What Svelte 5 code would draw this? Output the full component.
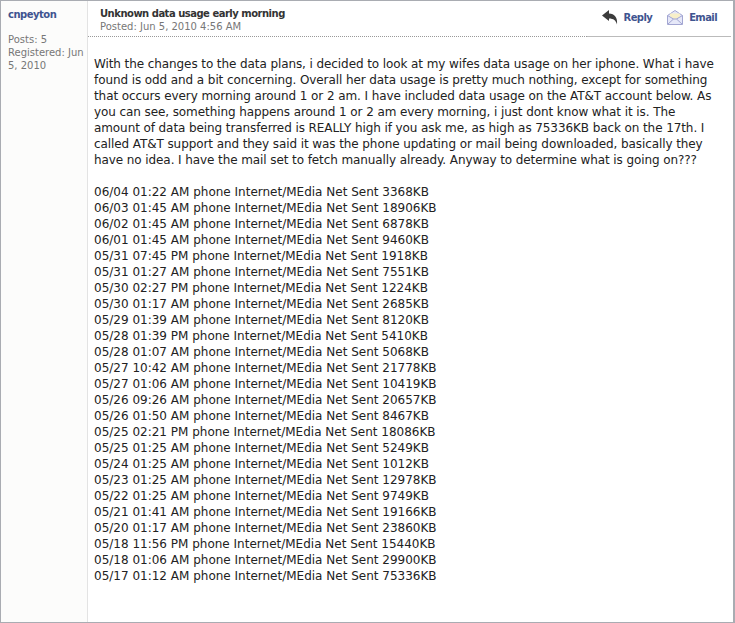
<script>
	const paragraph = [
		'With the changes to the data plans, i decided to look at my wifes data usage on her iphone. What i have',
		'found is odd and a bit concerning. Overall her data usage is pretty much nothing, except for something',
		'that occurs every morning around 1 or 2 am. I have included data usage on the AT&T account below. As',
		'you can see, something happens around 1 or 2 am every morning, i just dont know what it is. The',
		'amount of data being transferred is REALLY high if you ask me, as high as 75336KB back on the 17th. I',
		'called AT&T support and they said it was the phone updating or mail being downloaded, basically they',
		'have no idea. I have the mail set to fetch manually already. Anyway to determine what is going on???'
	];

	const rows = [
		'06/04 01:22 AM|3368', '06/03 01:45 AM|18906', '06/02 01:45 AM|6878', '06/01 01:45 AM|9460',
		'05/31 07:45 PM|1918', '05/31 01:27 AM|7551', '05/30 02:27 PM|1224', '05/30 01:17 AM|2685',
		'05/29 01:39 AM|8120', '05/28 01:39 PM|5410', '05/28 01:07 AM|5068', '05/27 10:42 AM|21778',
		'05/27 01:06 AM|10419', '05/26 09:26 AM|20657', '05/26 01:50 AM|8467', '05/25 02:21 PM|18086',
		'05/25 01:25 AM|5249', '05/24 01:25 AM|1012', '05/23 01:25 AM|12978', '05/22 01:25 AM|9749',
		'05/21 01:41 AM|19166', '05/20 01:17 AM|23860', '05/18 11:56 PM|15440', '05/18 01:06 AM|29900',
		'05/17 01:12 AM|75336'
	].map((r) => r.split('|'));
</script>

<div class="post">
	<aside class="author">
		<a class="name" href="#top">cnpeyton</a>
		<div class="stats">
			<div>Posts: 5</div>
			<div>Registered: Jun 5, 2010</div>
		</div>
	</aside>
	<main class="content">
		<header class="head">
			<div class="titles">
				<div class="title">Unknown data usage early morning</div>
				<div class="date">Posted: Jun 5, 2010 4:56 AM</div>
			</div>
			<nav class="actions">
				<a href="#top" class="action">
					<svg width="16" height="15" viewBox="0 0 16 15">
						<path d="M0 5.500 7 0v3.500c5.500 0 8.800 4 8 11-1-4-3.500-6-8-6V11z" fill="#3c3c3c" />
					</svg>
					Reply
				</a>
				<a href="#top" class="action">
					<svg width="16" height="15" viewBox="0 0 16 15">
						<path d="M.5 5.500 8 .5l7.500 5v9H.5z" fill="#e6e8f8" stroke="#a3a6d2" />
						<path d="M3 6.500V3.500h10v3L8 9.500z" fill="#f8efc8" />
						<path d="M1 14l5.500-5h3L15 14M.5 5.500l6 3.500M15.500 5.500l-6 3.500" fill="none" stroke="#a3a6d2" />
					</svg>
					Email
				</a>
			</nav>
		</header>
		<div class="body">
			<div class="para">
				{#each paragraph as line}
					<div>{line}</div>
				{/each}
			</div>
			<div class="log">
				{#each rows as [when, kb]}
					<div>{when} phone Internet/MEdia Net Sent {kb}KB</div>
				{/each}
			</div>
		</div>
	</main>
</div>

<style>
	:global(body) {
		margin: 0;
		background: #fff;
	}

	.post {
		display: flex;
		box-sizing: border-box;
		width: 735px;
		height: 623px;
		border: 1px solid #a9acb2;
		border-right-width: 2px;
		font-family: 'DejaVu Sans', sans-serif;
		overflow: hidden;
	}

	a {
		color: #3f5490;
		text-decoration: none;
	}

	.author {
		box-sizing: border-box;
		width: 87px;
		flex: none;
		padding: 7px 2px 0 7px;
		background: #fcfcfb;
		border-right: 1px solid #e3e3e3;
		font-size: 10px;
		line-height: 13px;
		color: #777;
	}

	.name {
		font-weight: bold;
		letter-spacing: -0.5px;
	}

	.stats {
		margin-top: 12px;
	}

	.content {
		flex: 1;
		min-width: 0;
	}

	.head {
		position: relative;
		display: flex;
		justify-content: space-between;
		height: 35px;
		margin-right: 2px;
		padding-left: 12px;
		border-bottom: 1px dotted #999;
	}

	/* the solid part of the rule under the action links */
	.head::after {
		content: '';
		position: absolute;
		right: 0;
		bottom: -1px;
		width: 144px;
		border-bottom: 1px solid #bbb;
	}

	.titles {
		padding-top: 6px;
		font-size: 10px;
		line-height: 13px;
		color: #777;
	}

	.title {
		font-weight: bold;
		color: #333;
		letter-spacing: -0.5px;
	}

	.actions {
		display: flex;
		gap: 15px;
		padding: 9px 14px 0 0;
	}

	.action {
		display: flex;
		align-items: center;
		align-self: flex-start;
		gap: 6px;
		font-size: 10px;
		font-weight: bold;
		line-height: 15px;
		letter-spacing: -0.6px;
	}

	.body {
		padding: 19px 0 0 6px;
		font-size: 12px;
		line-height: 16px;
		color: #222;
		white-space: nowrap;
	}

	.para {
		margin-bottom: 16px;
		letter-spacing: -0.09px;
	}
</style>
